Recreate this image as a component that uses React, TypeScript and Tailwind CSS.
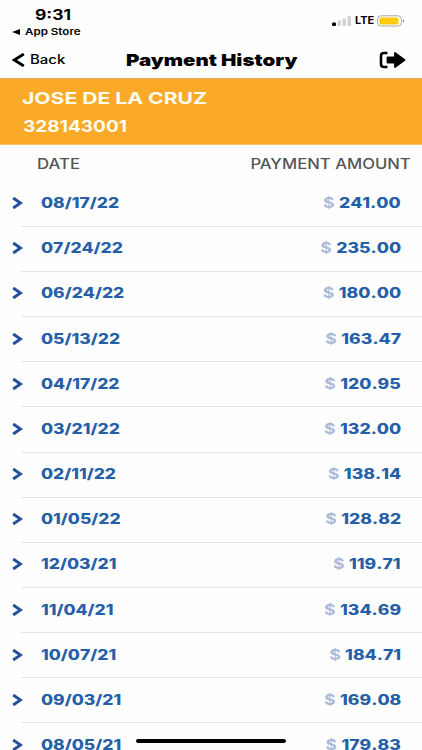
type Payment = {
  date: string;
  amount: string;
};

const payments: Payment[] = [
  { date: '08/17/22', amount: '241.00' },
  { date: '07/24/22', amount: '235.00' },
  { date: '06/24/22', amount: '180.00' },
  { date: '05/13/22', amount: '163.47' },
  { date: '04/17/22', amount: '120.95' },
  { date: '03/21/22', amount: '132.00' },
  { date: '02/11/22', amount: '138.14' },
  { date: '01/05/22', amount: '128.82' },
  { date: '12/03/21', amount: '119.71' },
  { date: '11/04/21', amount: '134.69' },
  { date: '10/07/21', amount: '184.71' },
  { date: '09/03/21', amount: '169.08' },
  { date: '08/05/21', amount: '179.83' },
];

function StatusBar() {
  return (
    <div className="flex h-10 shrink-0 items-start justify-between pr-[17px] pl-3">
      <div className="pt-[7px]">
        <div className="ml-[23px] origin-left scale-x-[1.25] text-[14px] leading-4 font-bold">9:31</div>
        <div className="flex items-center gap-[5px] pt-[3px]">
          <svg width="8" height="6" viewBox="0 0 8 6">
            <path d="M8 0v6L0 3z" />
          </svg>
          <span className="origin-left scale-x-[1.22] text-[9.5px] leading-3 font-semibold">App Store</span>
        </div>
      </div>
      <div className="flex items-center pt-[15px]">
        <svg width="20" height="12" viewBox="0 0 20 12">
          <rect x="0" y="7.5" width="4" height="3.5" rx="1" />
          <rect x="5.5" y="5.5" width="3.5" height="5.5" rx="0.8" fill="#d2d2d2" />
          <rect x="10.5" y="3.5" width="3.5" height="7.5" rx="0.8" fill="#d2d2d2" />
          <rect x="15.5" y="1" width="3.5" height="10" rx="0.8" fill="#d2d2d2" />
        </svg>
        <span className="ml-[3px] w-[22px] origin-left scale-x-[1.04] text-[10.5px] leading-3 font-bold">LTE</span>
        <svg width="28" height="12" viewBox="0 0 28 12">
          <rect x="0.5" y="0.8" width="24" height="10.2" rx="3.5" fill="white" stroke="#a8a8a0" />
          <rect x="2.3" y="2.5" width="19.2" height="7" rx="1.8" fill="#fdcb0a" />
          <path d="M26 4.3c1.6.6 1.6 2.9 0 3.5z" fill="#888" />
        </svg>
      </div>
    </div>
  );
}

function NavBar() {
  return (
    <header className="flex h-[38px] shrink-0 items-center justify-between pt-[2px] pr-4 pl-3">
      <button type="button" className="flex w-[114px] items-center gap-[5px]">
        <svg width="13" height="14" viewBox="0 0 13 14" fill="none" stroke="black" strokeWidth="2.8">
          <path d="M11.8 1 2.3 7l9.5 6" />
        </svg>
        <span className="origin-left scale-x-[1.2] text-[12.5px] leading-4 font-medium">Back</span>
      </button>
      <h1 className="flex-1 origin-left scale-x-[1.24] text-[16.5px] leading-5 font-black whitespace-nowrap">
        Payment History
      </h1>
      <button type="button" aria-label="Log out">
        <svg width="27" height="18" viewBox="0 0 27 18">
          <path d="M8.500 2H5Q2 2 2 5v8q0 3 3 3H8.500" fill="none" stroke="black" strokeWidth="2.600" />
          <path
            d="M8.500 6.500H16V2L25.500 9 16 16V11.500H8.500z"
            stroke="black"
            strokeWidth="1.800"
            strokeLinejoin="round"
          />
        </svg>
      </button>
    </header>
  );
}

function PaymentRow({ date, amount }: Payment) {
  return (
    <li className="ml-[21px] h-[45.17px] shrink-0 border-b border-[#e2e3e5] pr-[21px]">
      <div className="-ml-[9px] flex h-full items-center pb-px">
        <svg width="11" height="12" viewBox="0 0 11 12" fill="none" stroke="#25509b" strokeWidth="3">
          <path d="M1.200 1 8.500 6 1.200 11" />
        </svg>
        <span className="ml-[18px] flex-1 origin-left scale-x-[1.25] text-[14px] leading-5 font-extrabold [font-kerning:none]">
          {date}
        </span>
        <span className="origin-right scale-x-[1.26] text-[14px] leading-5 font-extrabold [font-kerning:none]">
          <span className="mr-[3.5px] font-bold text-[#acbad9]">$</span>
          {amount}
        </span>
      </div>
    </li>
  );
}

export default function App() {
  return (
    <div className="relative flex h-[750px] w-[422px] flex-col overflow-hidden bg-[#fefefe] font-['Inter',sans-serif] text-black">
      <StatusBar />
      <NavBar />
      <section className="h-[67px] shrink-0 border-t border-b border-t-[#d9a95c] border-b-[#f5c060] bg-[#faa928] pt-[9px] pl-[22px] text-[#fffdf0]">
        <div className="origin-left scale-x-[1.28] text-[16.5px] leading-5 font-bold whitespace-nowrap">
          JOSE DE LA CRUZ
        </div>
        <div className="mt-2 ml-px origin-left scale-x-[1.19] text-[16px] leading-5 font-bold">328143001</div>
      </section>
      <div className="flex h-[36.6px] shrink-0 items-center justify-between pr-[11px] pl-[37px] text-[14px] font-medium text-[#555]">
        <span className="origin-left scale-x-[1.2]">DATE</span>
        <span className="origin-right scale-x-[1.19]">PAYMENT AMOUNT</span>
      </div>
      <ul className="flex flex-col text-[#255fa8]">
        {payments.map((payment) => (
          <PaymentRow key={payment.date} {...payment} />
        ))}
      </ul>
      <div className="absolute top-[739px] left-[136px] h-1 w-[150px] rounded-full bg-black" />
    </div>
  );
}
